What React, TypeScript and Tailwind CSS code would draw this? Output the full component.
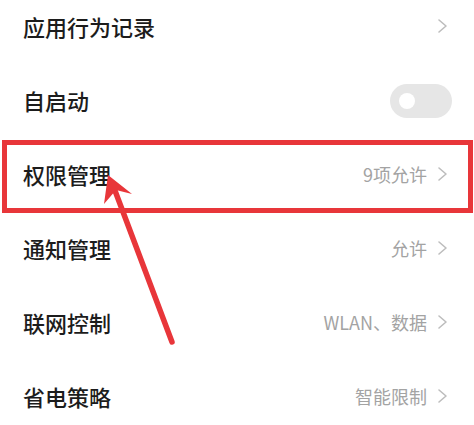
import React from "react";

const Chevron = () => (
  <svg width="11" height="16" viewBox="0 0 11 16" className="shrink-0">
    <polyline points="2,2 9,8 2,14" fill="none" stroke="#bdbdbd" strokeWidth="1.6" strokeLinecap="round" strokeLinejoin="round" />
  </svg>
);

type RowProps = { title: string; value?: string; chevron?: boolean; toggle?: boolean; children?: React.ReactNode };

const Row = ({ title, value, chevron, toggle, children }: RowProps) => (
  <div className="relative flex h-[74px] items-center justify-between pl-[23px] pr-[26px]">
    <span className="text-[22px] font-medium text-[#1c1c1c] leading-none">{title}</span>
    <div className="flex items-center gap-[10px]">
      {value && <span className="text-[18px] text-[#a3a3a3] leading-none">{value}</span>}
      {chevron && <Chevron />}
      {toggle && (
        <div className="-mr-[4px] mt-[2px] flex h-[34px] w-[62px] items-center rounded-full bg-[#e6e6e6] pl-[9px]">
          <div className="h-[16px] w-[16px] rounded-full bg-white" />
        </div>
      )}
    </div>
    {children}
  </div>
);

export default function App() {
  return (
    <div
      className="relative h-[425px] w-[474px] overflow-hidden bg-white"
      style={{ fontFamily: '"Noto Sans CJK SC", "Noto Sans", sans-serif' }}
    >
      <div className="-mt-[11px] flex flex-col">
        <Row title="应用行为记录" chevron />
        <Row title="自启动" toggle />
        <Row title="权限管理" value="9项允许" chevron>
          <div className="pointer-events-none absolute left-[2px] right-[1px] top-[3px] -bottom-[2px] border-[5px] border-[#e8363a]" />
        </Row>
        <Row title="通知管理" value="允许" chevron />
        <Row title="联网控制" value="WLAN、数据" chevron />
        <Row title="省电策略" value="智能限制" chevron />
      </div>
      <svg className="pointer-events-none absolute left-0 top-0" width="474" height="425" viewBox="0 0 474 425">
        <line x1="172" y1="342" x2="114" y2="188" stroke="#e8363a" strokeWidth="5.5" strokeLinecap="round" />
        <polygon points="108,175 104,204 116,190 132,194" fill="#e8363a" />
      </svg>
    </div>
  );
}
